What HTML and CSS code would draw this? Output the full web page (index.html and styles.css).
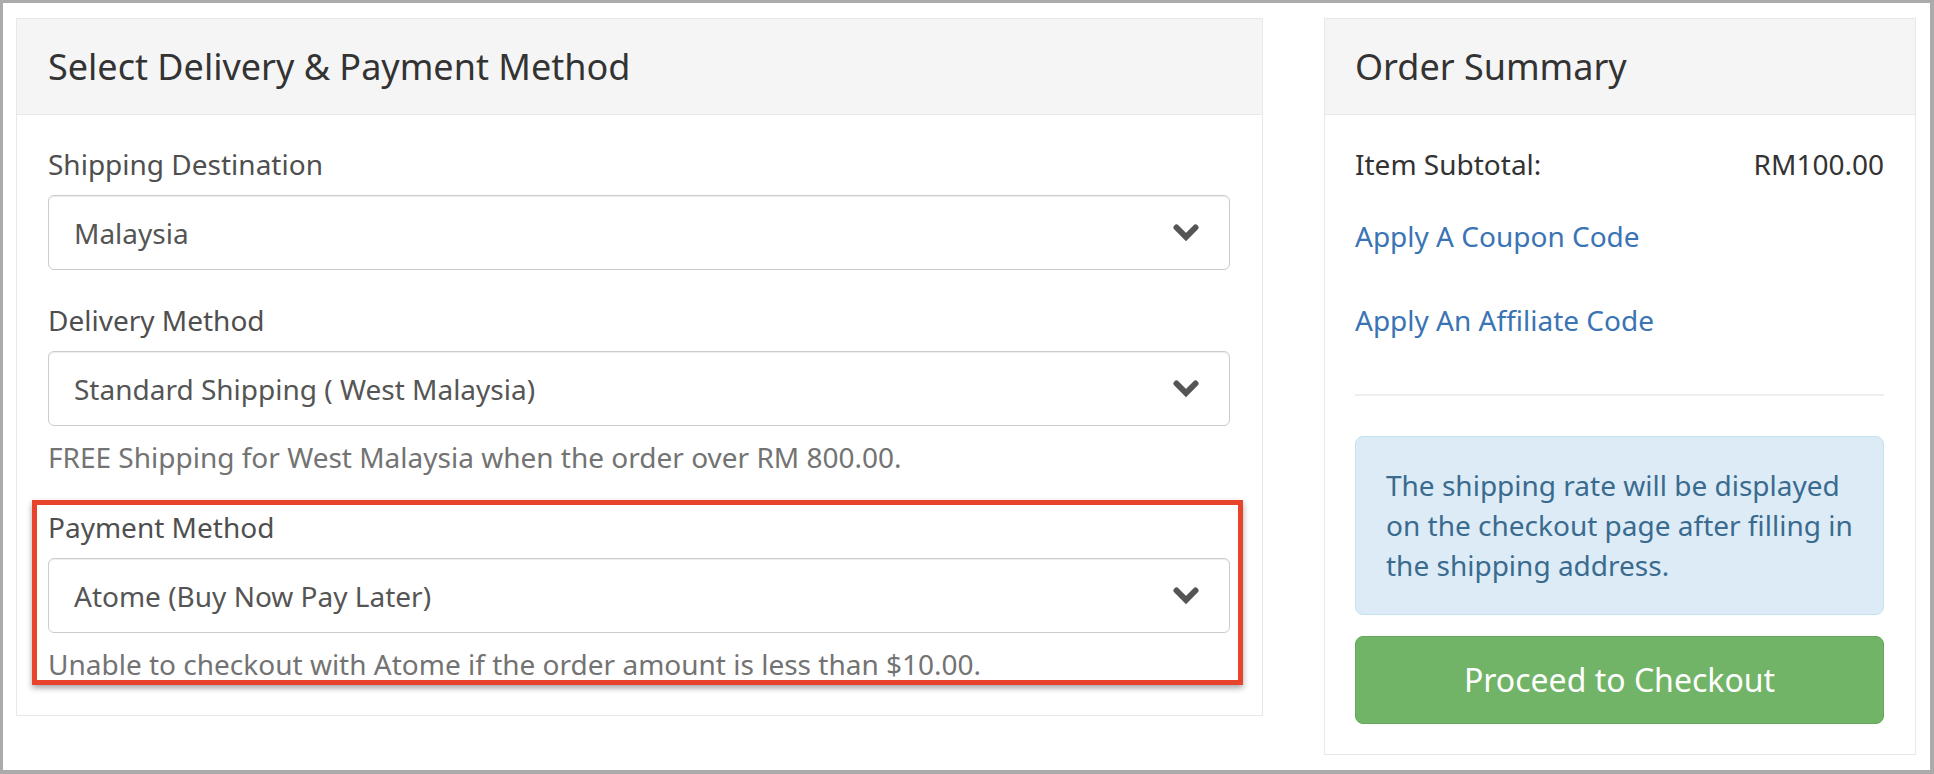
FILE: index.html
```html
<!DOCTYPE html>
<html lang="en">
<head>
<meta charset="utf-8">
<title>Select Delivery &amp; Payment Method</title>
<link rel="stylesheet" href="styles.css">
</head>
<body>
<div class="frame">
  <section class="panel panel-main">
    <div class="panel-heading">
      <h3 class="panel-title">Select Delivery &amp; Payment Method</h3>
    </div>
    <div class="panel-body">
      <div class="form-group">
        <label class="control-label">Shipping Destination</label>
        <div class="select">
          <span class="select-value">Malaysia</span>
          <svg class="chevron" viewBox="0 0 26 18" width="26" height="18"><polyline points="3.5,3.5 13,13 22.5,3.5" /></svg>
        </div>
      </div>
      <div class="form-group">
        <label class="control-label">Delivery Method</label>
        <div class="select">
          <span class="select-value">Standard Shipping ( West Malaysia)</span>
          <svg class="chevron" viewBox="0 0 26 18" width="26" height="18"><polyline points="3.5,3.5 13,13 22.5,3.5" /></svg>
        </div>
        <p class="help-block">FREE Shipping for West Malaysia when the order over RM 800.00.</p>
      </div>
      <div class="form-group form-group-last highlighted">
        <label class="control-label">Payment Method</label>
        <div class="select">
          <span class="select-value">Atome (Buy Now Pay Later)</span>
          <svg class="chevron" viewBox="0 0 26 18" width="26" height="18"><polyline points="3.5,3.5 13,13 22.5,3.5" /></svg>
        </div>
        <p class="help-block">Unable to checkout with Atome if the order amount is less than $10.00.</p>
        <div class="annotation"></div>
      </div>
    </div>
  </section>

  <aside class="panel panel-summary">
    <div class="panel-heading">
      <h3 class="panel-title">Order Summary</h3>
    </div>
    <div class="panel-body">
      <div class="summary-row">
        <span>Item Subtotal:</span>
        <span>RM100.00</span>
      </div>
      <a class="summary-link link-coupon" href="#">Apply A Coupon Code</a>
      <a class="summary-link link-affiliate" href="#">Apply An Affiliate Code</a>
      <hr class="divider">
      <div class="alert-info">The shipping rate will be displayed on the checkout page after filling in the shipping address.</div>
      <button class="btn-checkout" type="button">Proceed to Checkout</button>
    </div>
  </aside>
</div>
</body>
</html>
```

FILE: styles.css
```css
* {
  box-sizing: border-box;
}

html, body {
  margin: 0;
  padding: 0;
  background: #ffffff;
}

body {
  font-family: "Noto Sans", "Open Sans", sans-serif;
  font-size: 28px;
  line-height: 40px;
  color: #333333;
}

.frame {
  width: 1934px;
  height: 774px;
  border-style: solid;
  border-color: #ababab;
  border-width: 3px 4px 4px 3px;
  display: flex;
  align-items: flex-start;
  gap: 61px;
  padding: 15px 14px 0 13px;
}

.panel {
  border: 1px solid #e8e8e8;
  background: #ffffff;
}

.panel-main {
  width: 1247px;
}

.panel-summary {
  width: 592px;
}

.panel-heading {
  background: #f5f5f5;
  border-bottom: 1px solid #e8e8e8;
  padding: 26px 31px 25px;
}

.panel-summary .panel-heading {
  padding-left: 30px;
}

.panel-title {
  margin: 0;
  font-size: 36px;
  line-height: 44px;
  font-weight: 400;
  color: #333333;
}

.panel-body {
  padding: 29px 32px 31px 31px;
}

.panel-summary .panel-body {
  padding: 29px 31px 30px 30px;
}

.form-group {
  margin-bottom: 30px;
}

.form-group-last {
  margin-bottom: 0;
}

.highlighted {
  position: relative;
}

.annotation {
  position: absolute;
  left: -16px;
  right: -13px;
  top: -7px;
  bottom: -1px;
  border: 5px solid #e8432b;
  box-shadow: 0 3px 6px rgba(0, 0, 0, 0.35);
  pointer-events: none;
}

.control-label {
  display: block;
  color: #4f4f4f;
  margin-bottom: 11px;
}

.select {
  height: 75px;
  border: 1px solid #cccccc;
  border-radius: 6px;
  box-shadow: inset 0 1px 1px rgba(0, 0, 0, 0.075);
  display: flex;
  align-items: center;
  justify-content: space-between;
  padding: 0 30px 0 25px;
  color: #555555;
}

.chevron {
  display: block;
  fill: none;
  stroke: #555555;
  stroke-width: 6;
  stroke-linecap: round;
  stroke-linejoin: miter;
}

.help-block {
  margin: 11px 0 0;
  color: #737373;
}

.summary-row {
  display: flex;
  justify-content: space-between;
  color: #333333;
}

.summary-link {
  display: block;
  color: #3a74b5;
  text-decoration: none;
}

.link-coupon {
  margin-top: 32px;
}

.link-affiliate {
  margin-top: 44px;
}

.divider {
  margin: 54px 0 0;
  border: 0;
  border-top: 2px solid #eeeeee;
  height: 0;
}

.alert-info {
  margin-top: 40px;
  background: #dcebf6;
  border: 1px solid #c3e4ef;
  border-radius: 8px;
  color: #3a6b8f;
  padding: 28px 30px 29px 30px;
}

.btn-checkout {
  display: block;
  width: 100%;
  height: 88px;
  margin-top: 21px;
  border: 1px solid #64a95a;
  border-radius: 8px;
  background: #72b467;
  color: #ffffff;
  font-family: "Noto Sans", "Open Sans", sans-serif;
  font-size: 32px;
  line-height: 46px;
  padding: 0;
  cursor: pointer;
}
```
